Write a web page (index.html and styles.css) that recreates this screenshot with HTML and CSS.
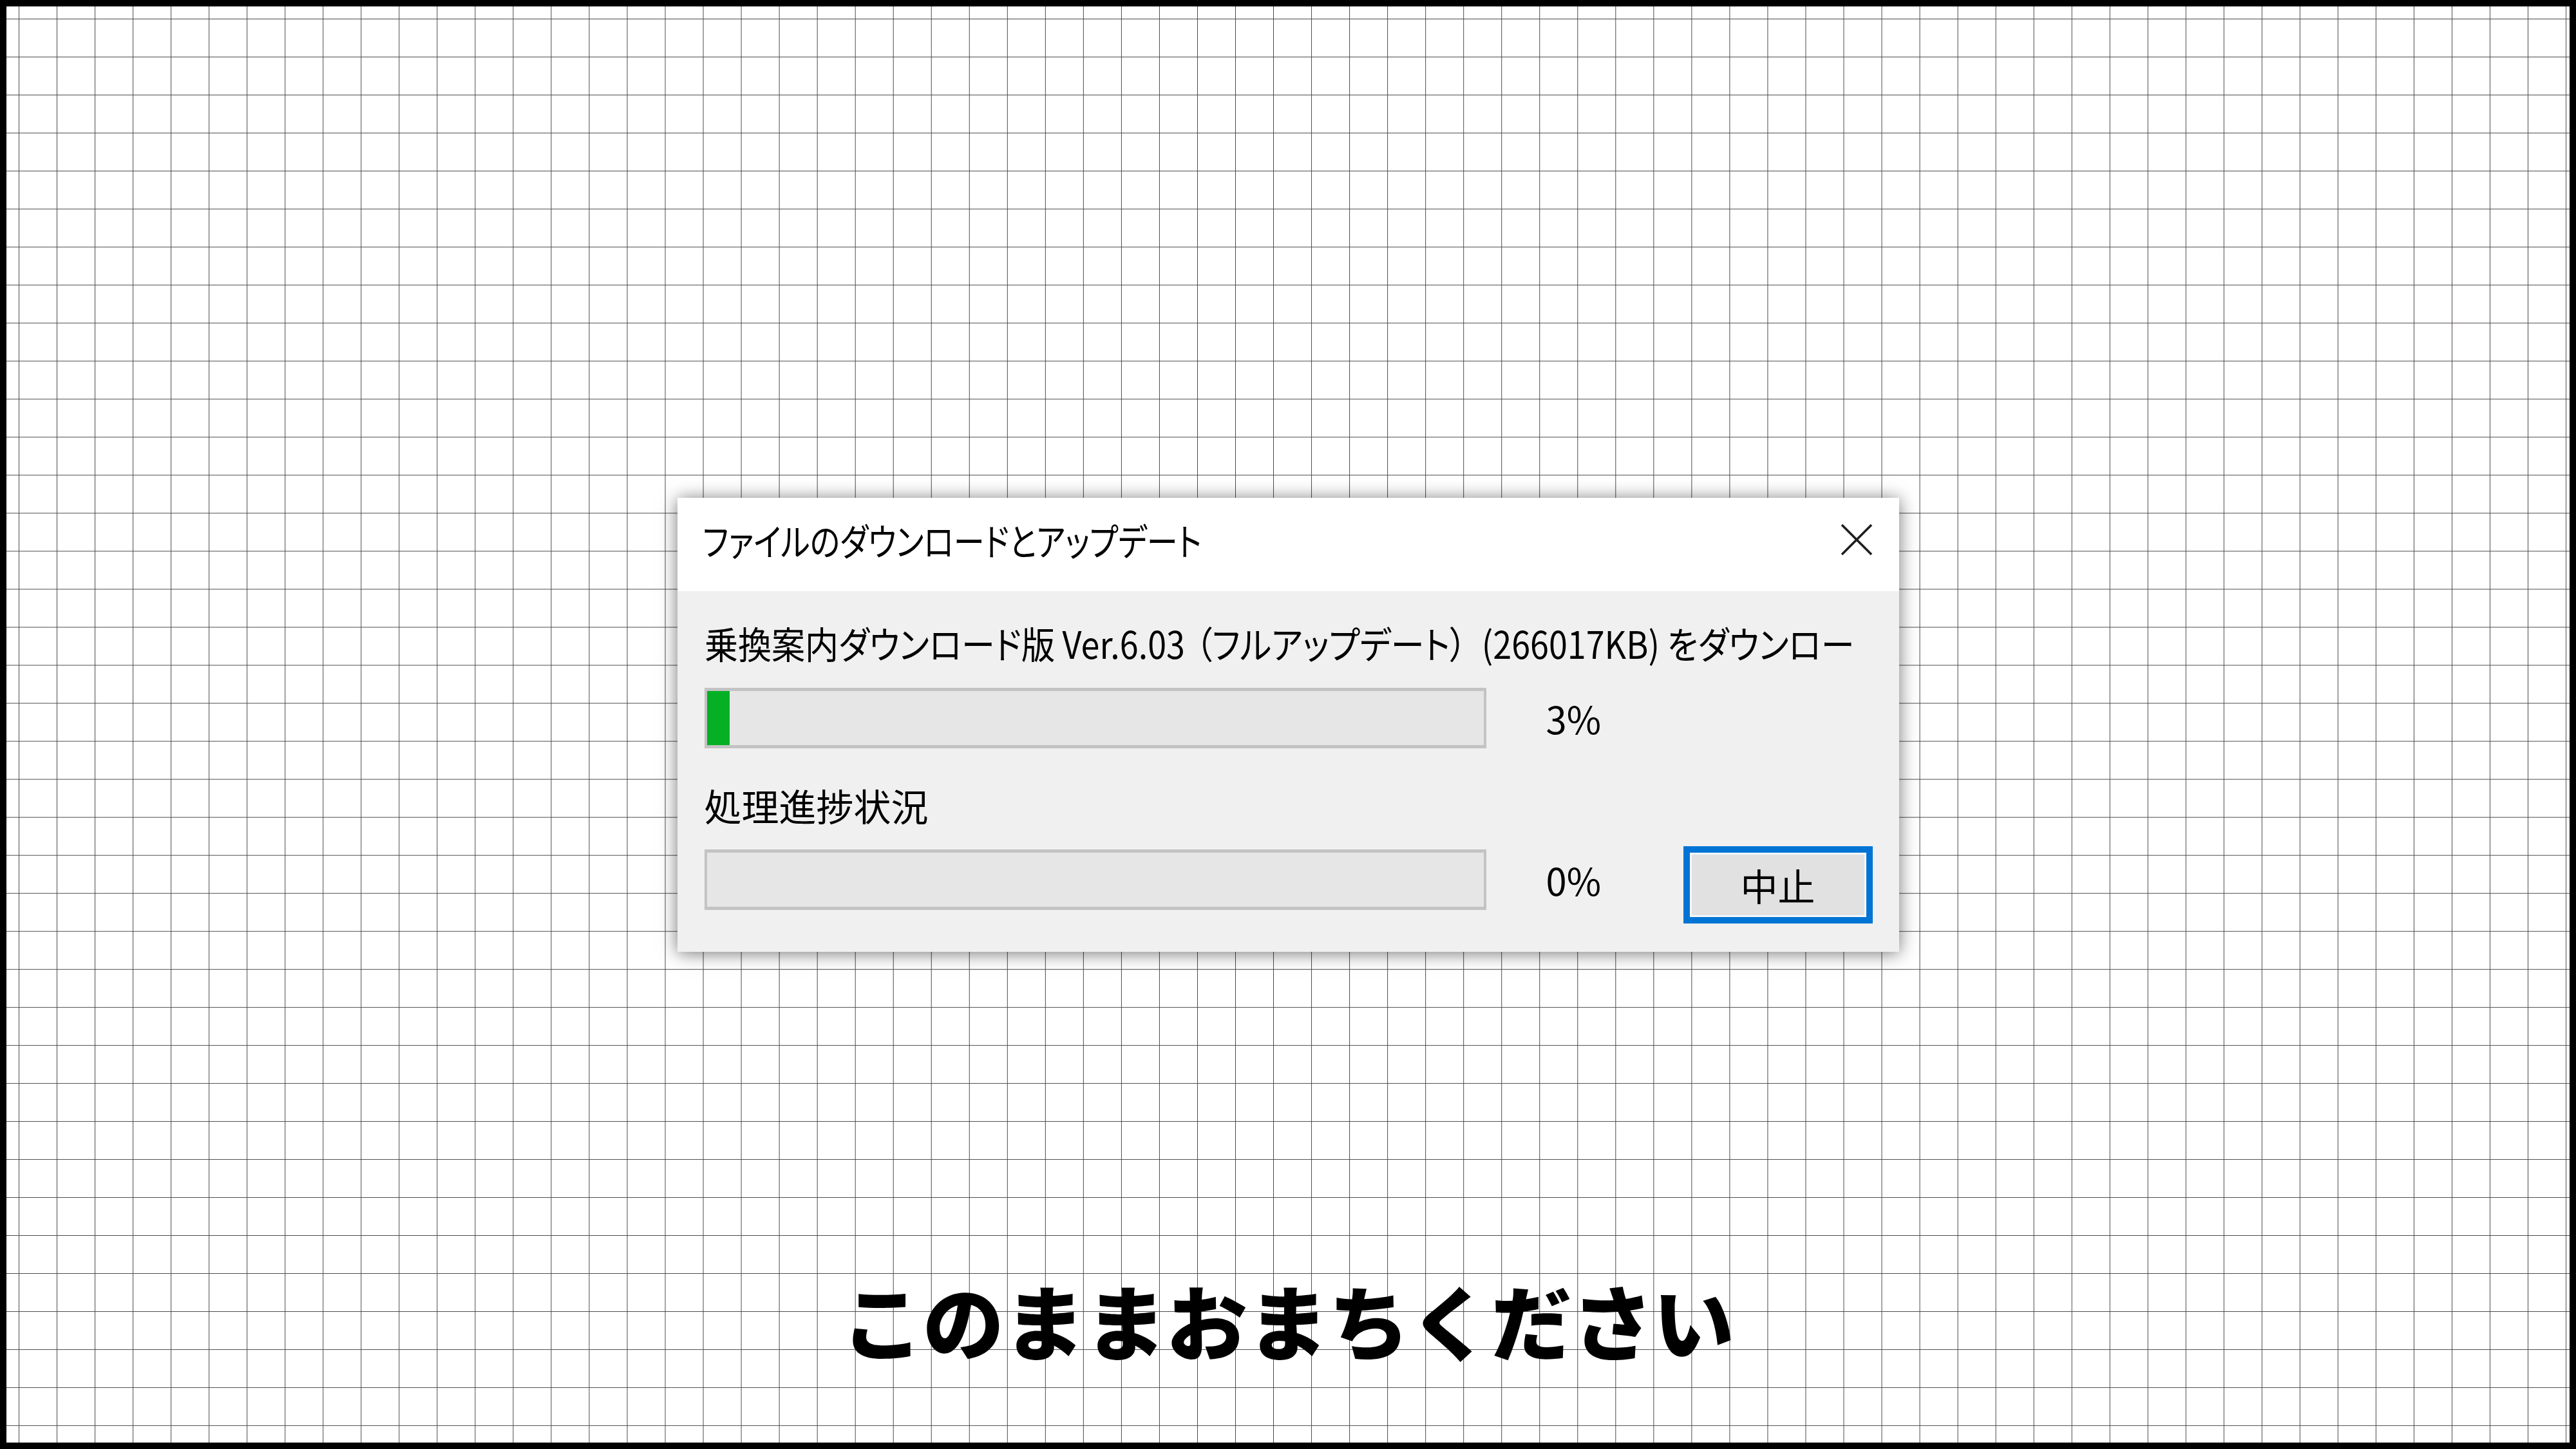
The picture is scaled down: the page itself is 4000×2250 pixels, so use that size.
FILE: index.html
```html
<!DOCTYPE html>
<html lang="ja">
<head>
  <meta charset="UTF-8" />
  <meta name="viewport" content="width=device-width, initial-scale=1.0"/>
  <title>このままおまちください</title>
  <link rel="stylesheet" href="styles.css">
</head>
<body>
  <div class="frame">
    <div class="dialog">
      <div class="titlebar">
        <span class="title">ファイルのダウンロードとアップデート</span>
        <svg class="close" width="50" height="50" viewBox="0 0 50 50">
          <path d="M2 2 L48 48 M48 2 L2 48" />
        </svg>
      </div>

      <div class="dialog-body">
        <p class="status"><span class="squeeze">乗換案内ダウンロード版 Ver.6.03<span class="paren-open">（</span>フルアップデート<span class="paren-close">）</span>(266017KB) をダウンロー</span></p>
        <div class="progress-row">
          <div class="bar"><div class="fill" style="width: 35px"></div></div>
          <span class="pct">3%</span>
        </div>

        <p class="status">処理進捗状況</p>
        <div class="action-row">
          <div class="progress-row">
            <div class="bar"></div>
            <span class="pct">0%</span>
          </div>
          <button class="btn">中止</button>
        </div>
      </div>
    </div>

    <p class="caption">このままおまちください</p>
  </div>
</body>
</html>
```

FILE: styles.css
```css
* {
  margin: 0; padding: 0;
  box-sizing: border-box;
}
body {
  font-family: "Noto Sans CJK JP", sans-serif;
  background-color: #000;
}

.frame {
  width: 4000px;
  height: 2250px;
  border: 10px solid #000;
  background-color: #fff;
  background-image:
    linear-gradient(to right, #4b4646 1px, transparent 1px),
    linear-gradient(to bottom, #4b4646 1px, transparent 1px);
  background-size: 59.04px 59.04px;
  background-position: 19px 19px;
  display: grid;
  grid-template-rows: 1fr auto 1fr;
  justify-items: center;
}

/* dialog window */
.dialog {
  grid-row: 2;
  width: 1897px;
  color: #000;
  font-size: 58px;
  font-feature-settings: "palt";
  box-shadow: 0 2px 26px rgba(0,0,0,0.55);
}
.titlebar {
  height: 145px;
  background-color: #fff;
  display: flex;
  align-items: center;
  justify-content: space-between;
  padding: 0 41px 15px 39px;
}
.title {
  display: inline-block;
  line-height: 1;
  transform: scaleX(0.83);
  transform-origin: left center;
}
.close path {
  stroke: #1e1e1e;
  stroke-width: 3.6;
  fill: none;
}

.dialog-body {
  background-color: #f0f0f0;
  padding: 45px 41px 44px 42px;
}
.status {
  height: 70px;
  line-height: 70px;
  white-space: nowrap;
}
.squeeze {
  display: inline-block;
  transform: scaleX(0.897);
  transform-origin: left center;
}
.paren-open {
  margin-left: 18px;
}
.paren-close {
  margin-right: 26px;
}
.status + .progress-row {
  margin-top: 35px;
}
.progress-row + .status {
  margin-top: 53px;
}

.progress-row {
  display: flex;
  align-items: center;
  gap: 93px;
}
.bar {
  width: 1214px;
  height: 94px;
  border: 5px solid #c3c3c3;
  border-left-width: 4px;
  border-right-width: 4px;
  background-color: #e6e6e6;
}
.fill {
  height: 100%;
  background-color: #06b025;
}
.pct {
  line-height: 1;
}

.action-row {
  display: flex;
  align-items: flex-start;
  margin-top: 29px;
}
.action-row .progress-row {
  margin-top: 5px;
}
.btn {
  margin-left: auto;
  width: 294px;
  height: 120px;
  border: 10px solid #0074d4;
  box-shadow: inset 0 0 0 3px #f4f8fb;
  background-color: #e1e1e1;
  font-family: inherit;
  font-size: 58px;
  color: #000;
  line-height: 1;
}

.caption {
  grid-row: 3;
  align-self: start;
  margin-top: 507px;
  font-size: 126px;
  font-weight: 900;
  line-height: 1;
  color: #000;
}
```
